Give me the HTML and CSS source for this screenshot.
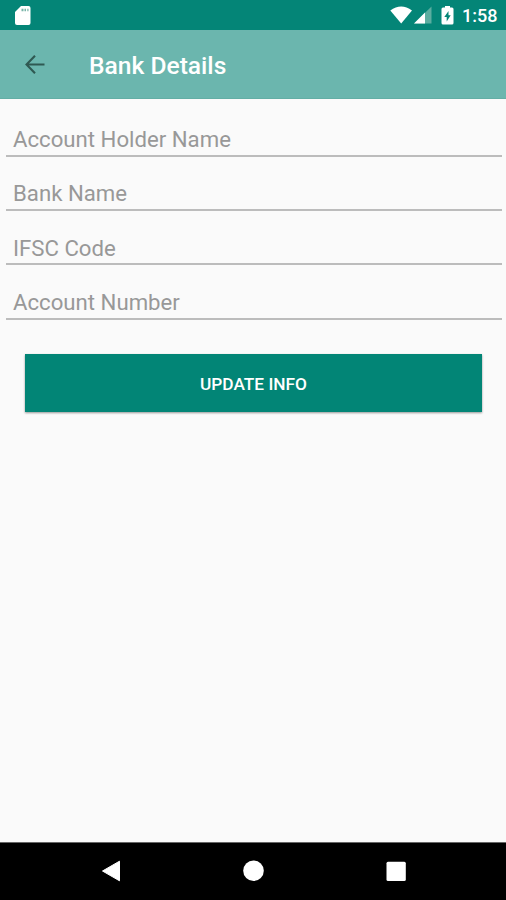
FILE: index.html
```html
<!DOCTYPE html>
<html lang="en">
<head>
<meta charset="utf-8">
<title>Bank Details</title>
<link rel="stylesheet" href="styles.css">
</head>
<body>
<div class="screen">
  <div class="status">
    <svg class="sd" width="17" height="20" viewBox="0 0 17 20"><path d="M6 0H13.500Q15.500 0 15.500 2V17Q15.500 19 13.500 19H2Q0 19 0 17V6Z" fill="#fff"/><path d="M6.500 4h2M9.500 4h1.500M12.300 4h1.200" stroke="#78b4a8" stroke-width="2.500"/></svg>
    <div class="indicators">
      <svg class="wifi" width="23" height="18" viewBox="0 0 23 18"><path d="M0.300 4.500Q11.200-3.500 22 4.500L11.200 17.500Z" fill="#fff"/></svg>
      <svg class="signal" width="18" height="18" viewBox="0 0 18 18"><path d="M0 17.500L17.500 0.500V17.500Z" fill="#5bada0"/><path d="M0 17.500L11 6.500V17.500Z" fill="#fff"/></svg>
      <svg class="battery" width="13" height="19" viewBox="0 0 13 19"><path d="M4 0H9V1.500H11Q12.500 1.500 12.500 3V17Q12.500 18.500 11 18.500H2Q0.500 18.500 0.500 17V3Q0.500 1.500 2 1.500H4Z" fill="#fff"/><path d="M7.500 5L3.300 11H5.700V15.500L9.700 9.300H7.500Z" fill="#048577"/></svg>
      <span class="clock">1:58</span>
    </div>
  </div>
  <header class="appbar">
    <svg class="back" width="20" height="20" viewBox="0 0 20 20"><path d="M19.500 10.500H2M10 1.700L1.500 10.500L10 19.300" fill="none" stroke="#2f5952" stroke-width="2.100"/></svg>
    <h1 class="title">Bank Details</h1>
  </header>
  <main class="form">
    <div class="field"><span class="hint">Account Holder Name</span></div>
    <div class="field"><span class="hint">Bank Name</span></div>
    <div class="field"><span class="hint">IFSC Code</span></div>
    <div class="field"><span class="hint">Account Number</span></div>
    <button class="update" type="button">UPDATE INFO</button>
  </main>
  <nav class="navbar">
    <svg width="20" height="22" viewBox="0 0 20 22"><path d="M1.500 11L18.500 1.200V20.800Z" fill="#fff" stroke="#fff" stroke-linejoin="round"/></svg>
    <svg width="22" height="22" viewBox="0 0 22 22"><circle cx="10.500" cy="10.700" r="10.300" fill="#fff"/></svg>
    <svg width="20" height="22" viewBox="0 0 20 22"><rect x="0.500" y="1.700" width="19.300" height="19.300" rx="1.500" fill="#fff"/></svg>
  </nav>
</div>
</body>
</html>
```

FILE: styles.css
```css
* { box-sizing: border-box; }
body { margin: 0; background: #fafafa; font-family: Roboto, "Liberation Sans", sans-serif; }
.screen { width: 506px; height: 900px; display: flex; flex-direction: column; overflow: hidden; }
.status { height: 30px; flex: none; background: #048577; display: flex; justify-content: space-between; padding: 6px 9px 0 15px; }
.indicators { display: flex; align-items: flex-start; }
.wifi { margin-right: 1px; }
.signal { margin-right: 9px; }
.battery { margin-right: 8px; }
.clock { width: 35px; color: #fff; font-size: 18px; line-height: 20px; font-weight: 500; white-space: nowrap; }
.appbar { height: 69px; flex: none; background: #6bb6ae; border-bottom: 1px solid #63aea5; display: flex; align-items: center; padding-left: 25px; }
.back { margin-right: 44px; }
.title { margin: 4px 0 0; color: #fff; font-size: 24.600px; line-height: 32px; font-weight: 500; white-space: nowrap; }
.form { flex: 1; padding: 3.200px 4px 0 6px; }
.field { height: 54.400px; border-bottom: 2px solid #bcbcbc; padding: 22.900px 0 0 7px; }
.hint { display: block; color: #989898; font-size: 22.200px; line-height: 28px; white-space: nowrap; }
.update { display: block; width: 457px; height: 58px; margin: 34px 0 0 19px; padding: 2px 0 0; border: 0; background: #028576; color: #fff; font-family: inherit; font-size: 17.300px; font-weight: 500; box-shadow: 0 1px 2px rgba(0, 0, 0, 0.400); }
.navbar { height: 58px; flex: none; background: #000; border-top: 1px solid #666; display: flex; justify-content: space-between; align-items: center; padding: 0 100px 2px 101px; }
```
